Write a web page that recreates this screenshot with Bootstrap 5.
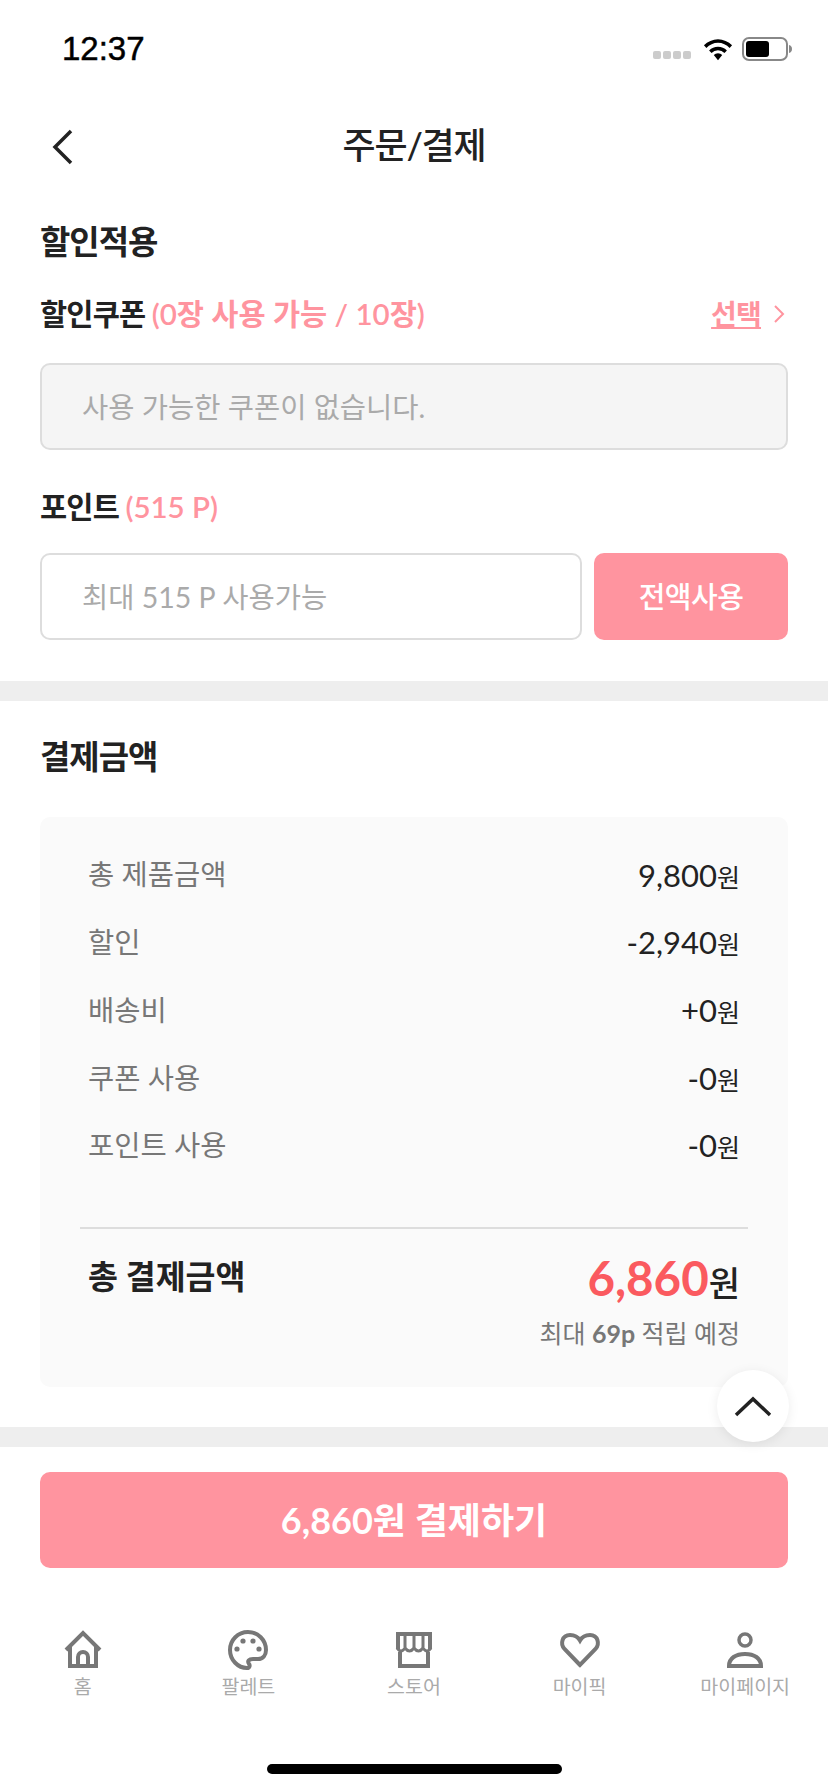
<!doctype html>
<html lang="ko">
<head>
<meta charset="utf-8">
<link href="https://cdn.jsdelivr.net/npm/bootstrap@5.3.0/dist/css/bootstrap.min.css" rel="stylesheet">
<style>
html,body{margin:0;background:#fff}
body{width:828px;height:1792px;overflow:hidden;font-family:"Lato","Noto Sans CJK KR",sans-serif;color:#222}
.shell{width:828px;height:1792px;display:flex;flex-direction:column;position:relative}
.statusline{height:100px;padding:0 36px 0 62px;align-items:flex-start}
.clock{font-family:"Liberation Sans",sans-serif;font-size:33px;font-weight:400;color:#000;margin-top:29px;line-height:40px;-webkit-text-stroke:.5px #000}
.sysicons{margin-top:37px;gap:9px}
.dots{gap:2px;margin-top:14px;margin-right:3px}
.dots i{display:block;width:8px;height:8px;border-radius:2px;background:#ccc}
.topbar{height:90px;position:relative}
.topbar svg{margin-left:52px;margin-top:29px}
.pagetitle{position:absolute;left:0;right:0;top:20px;text-align:center;font-size:36px;font-weight:500;line-height:50px;margin:0;letter-spacing:-1.2px}
.sect{padding:0 40px}
.headline{font-size:33px;font-weight:700;line-height:46px;margin:0;letter-spacing:-1px}
.lbl{font-size:29.500px;font-weight:700;line-height:38px;margin:0;letter-spacing:-.8px}
.pinkish{color:#ff949f;font-weight:600;letter-spacing:0}
.selectlink{font-size:28px;font-weight:600;color:#ff949f;text-decoration:underline;letter-spacing:-.8px}
.selectwrap{gap:12px;padding-right:3px}
.fakefield{height:87px;border-radius:10px;border:2px solid #ddd;font-size:28.500px;color:#aaa;padding:0 40px;background:#fff;font-weight:400}
.fakefield::placeholder{color:#aaa;opacity:1}
.fakefield:disabled{background:#f5f5f5}
.allbtn{width:194px;height:87px;background:#ff949f;border-radius:10px;border:0;color:#fff;font-size:29px;font-weight:500;letter-spacing:-.5px;padding:0}
.divide{height:20px;background:#eee}
.sumbox{background:#fafafa;border-radius:10px;margin-top:38px;height:570px;padding:24px 48px 0}
.sumrow{height:67.700px;font-size:28.500px;color:#777}
.sumrow b{font-weight:400;color:#222;font-size:31px}
.sumrow small{font-size:25px;color:#222}
.rule{height:2px;background:#ddd;margin:48px -8px 0}
.finalrow{font-size:32.500px;font-weight:700;margin-top:24px}
.bignum{color:#fa5a5f;font-size:47.500px;font-weight:700;line-height:50px}
.bigwon{font-size:34px;font-weight:500}
.earn{font-size:25px;color:#777;margin-top:6px}
.earn b{font-weight:700}
.payarea{padding:25px 40px 0}
.paybtn{width:100%;height:96px;background:#ff949f;color:#fff;border:0;border-radius:10px;font-size:36px;font-weight:700}
.upbtn{position:absolute;left:717px;top:1370px;width:72px;height:72px;border-radius:50%;background:#fff;box-shadow:0 2px 12px rgba(0,0,0,.08);display:flex;align-items:center;justify-content:center;border:0;padding:0}
.tabs{position:absolute;left:0;right:0;top:1630px}
.tabitem{width:166px;display:flex;flex-direction:column;align-items:center;color:#aaa;font-size:19.500px;line-height:26px;gap:4px}
.tabglyph{width:44px;height:40px;display:block;fill:none;stroke:#777;stroke-width:4}
.tabglyph .dotfill{fill:#777;stroke:none}
.tabglyph .thin{stroke-width:3}
.homebar{position:absolute;left:267px;top:1764px;width:295px;height:10px;background:#000;border-radius:5px}
</style>
</head>
<body>
<div class="shell">
  <div class="d-flex justify-content-between statusline">
    <div class="clock">12:37</div>
    <div class="d-flex sysicons">
      <div class="d-flex dots"><i></i><i></i><i></i><i></i></div>
      <svg width="30" height="24" viewBox="0 0 32 24"><path d="M1 8a21 21 0 0 1 30 0l-2.600 2.800a17 17 0 0 0-24.800 0zM6.500 13.500a13.500 13.500 0 0 1 19 0l-2.600 2.800a9.500 9.500 0 0 0-13.800 0zM11.500 18.500a6 6 0 0 1 9 0L16 24z" fill="#000"/></svg>
      <svg width="50" height="24" viewBox="0 0 50 24"><rect x="1" y="1" width="44" height="22" rx="6" fill="none" stroke="#888" stroke-width="2"/><rect x="4" y="4" width="23" height="16" rx="3" fill="#000"/><path d="M47 8c2 .5 3 2 3 4s-1 3.500-3 4z" fill="#888"/></svg>
    </div>
  </div>
  <div class="topbar">
    <svg width="22" height="36" viewBox="0 0 22 36" class="d-block"><path d="M19 2 3 18l16 16" fill="none" stroke="#222" stroke-width="3.500"/></svg>
    <h1 class="pagetitle">주문/결제</h1>
  </div>
  <div class="sect" style="padding-top:28px">
    <h2 class="headline">할인적용</h2>
    <div class="d-flex justify-content-between align-items-center" style="margin-top:29px">
      <p class="lbl">할인쿠폰 <span class="pinkish">(0장 사용 가능 / 10장)</span></p>
      <span class="d-flex align-items-center selectwrap"><span class="selectlink">선택</span><svg width="12" height="20" viewBox="0 0 12 20"><path d="M2 2l8 8-8 8" fill="none" stroke="#ff949f" stroke-width="2"/></svg></span>
    </div>
    <input class="form-control fakefield" style="margin-top:28px" disabled placeholder="사용 가능한 쿠폰이 없습니다.">
    <p class="lbl" style="margin-top:38px">포인트 <span class="pinkish">(515 P)</span></p>
    <div class="d-flex justify-content-between" style="margin-top:27px">
      <input class="form-control fakefield" style="width:542px" placeholder="최대 515 P 사용가능">
      <button class="btn allbtn">전액사용</button>
    </div>
  </div>
  <div class="divide" style="margin-top:41px"></div>
  <div class="sect">
    <h2 class="headline" style="margin-top:32px">결제금액</h2>
    <div class="sumbox">
      <div class="d-flex justify-content-between align-items-center sumrow"><span>총 제품금액</span><b>9,800<small>원</small></b></div>
      <div class="d-flex justify-content-between align-items-center sumrow"><span>할인</span><b>-2,940<small>원</small></b></div>
      <div class="d-flex justify-content-between align-items-center sumrow"><span>배송비</span><b>+0<small>원</small></b></div>
      <div class="d-flex justify-content-between align-items-center sumrow"><span>쿠폰 사용</span><b>-0<small>원</small></b></div>
      <div class="d-flex justify-content-between align-items-center sumrow"><span>포인트 사용</span><b>-0<small>원</small></b></div>
      <div class="rule"></div>
      <div class="d-flex justify-content-between align-items-start finalrow"><span>총 결제금액</span><span><span class="bignum">6,860</span><span class="bigwon">원</span></span></div>
      <div class="text-end earn">최대 <b>69p</b> 적립 예정</div>
    </div>
  </div>
  <div class="divide" style="margin-top:40px"></div>
  <div class="payarea"><button class="btn paybtn">6,860원 결제하기</button></div>
  <button class="upbtn" aria-label="top"><svg width="38" height="22" viewBox="0 0 38 22"><path d="M2 20 19 4l17 16" fill="none" stroke="#222" stroke-width="3.500"/></svg></button>
  <nav class="tabs d-flex justify-content-between">
    <div class="tabitem"><svg class="tabglyph" viewBox="0 0 44 40"><path d="M5 20 22 3l17 17M9 17v19h26V17M17 36v-9a5 5 0 0 1 10 0v9"/></svg><span>홈</span></div>
    <div class="tabitem"><svg class="tabglyph" viewBox="0 0 44 40"><path d="M22 2C12 2 4 10 4 20c0 10 8 18 17 18 3 0 3-3 2-4-2-3 0-5 4-5h5c5 0 8-4 8-9C40 10 32 2 22 2z"/><circle class="dotfill" cx="17" cy="11" r="2.600"/><circle class="dotfill" cx="27" cy="11" r="2.600"/><circle class="dotfill" cx="11" cy="19" r="2.600"/><circle class="dotfill" cx="33" cy="19" r="2.600"/></svg><span>팔레트</span></div>
    <div class="tabitem"><svg class="tabglyph" viewBox="0 0 44 40"><path d="M6 19V4h32v15M8 22v14h28V22"/><path class="thin" d="M13 4v15M22 4v15M31 4v15M5 18q4 6 8 0q4.500 6 9 0q4.500 6 9 0q4 6 8 0"/></svg><span>스토어</span></div>
    <div class="tabitem"><svg class="tabglyph" viewBox="0 0 44 40"><path d="M22 35 6.500 19C2 14 4 5 12 5c4 0 8 2 10 5.500C24 7 28 5 32 5c8 0 10 9 5.500 14z"/></svg><span>마이픽</span></div>
    <div class="tabitem"><svg class="tabglyph" viewBox="0 0 44 40"><circle cx="22" cy="10" r="6" stroke-width="3.500"/><path d="M6 36c0-8 7-12 16-12s16 4 16 12z"/></svg><span>마이페이지</span></div>
  </nav>
  <div class="homebar"></div>
</div>
<script src="https://cdn.jsdelivr.net/npm/bootstrap@5.3.0/dist/js/bootstrap.bundle.min.js"></script>
</body>
</html>
